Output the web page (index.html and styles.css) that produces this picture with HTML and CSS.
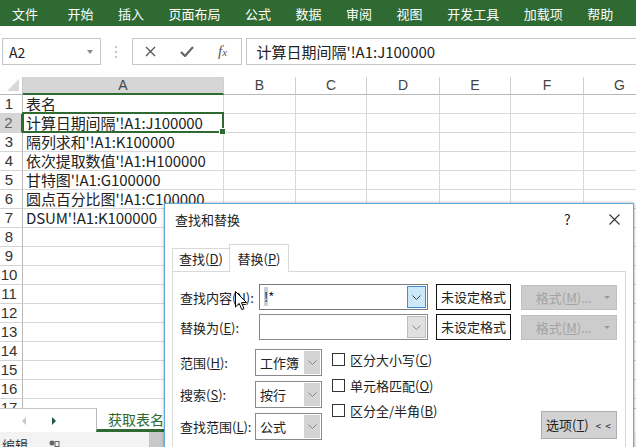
FILE: index.html
```html
<!DOCTYPE html>
<html>
<head>
<meta charset="utf-8">
<title>Excel</title>
<link rel="stylesheet" href="styles.css">
</head>
<body>
<div class="app">
  <nav class="menubar">
    <span class="menu first">文件</span><span class="menu">开始</span><span class="menu">插入</span><span class="menu">页面布局</span><span class="menu">公式</span><span class="menu">数据</span><span class="menu">审阅</span><span class="menu">视图</span><span class="menu">开发工具</span><span class="menu">加载项</span><span class="menu">帮助</span>
  </nav>

  <div class="fbar">
    <div class="namebox"><span>A2</span><span class="nb-arrow"></span></div>
    <div class="dots"><i></i><i></i><i></i></div>
    <div class="fbtns">
      <span class="fb"><svg width="11" height="11" viewBox="0 0 11 11"><path d="M1 1L10 10M10 1L1 10" stroke="#555" stroke-width="1.3" fill="none"/></svg></span>
      <span class="fb"><svg width="14" height="11" viewBox="0 0 14 11"><path d="M1 6L5 10L13 1" stroke="#666" stroke-width="2.2" fill="none"/></svg></span>
      <span class="fb fx">f<small>x</small></span>
    </div>
    <div class="finput">计算日期间隔'!A1:J100000</div>
  </div>

  <div class="sheet">
    <div class="grid">
      <div class="corner"><span class="tri"></span></div><div class="ch selh">A</div><div class="ch">B</div><div class="ch">C</div><div class="ch">D</div><div class="ch">E</div><div class="ch">F</div><div class="ch">G</div>
      <div class="rh">1</div><div class="c">表名</div><div class="c"></div><div class="c"></div><div class="c"></div><div class="c"></div><div class="c"></div><div class="c"></div>
      <div class="rh selr">2</div><div class="c active">计算日期间隔'!A1:J100000</div><div class="c"></div><div class="c"></div><div class="c"></div><div class="c"></div><div class="c"></div><div class="c"></div>
      <div class="rh">3</div><div class="c">隔列求和'!A1:K100000</div><div class="c"></div><div class="c"></div><div class="c"></div><div class="c"></div><div class="c"></div><div class="c"></div>
      <div class="rh">4</div><div class="c">依次提取数值'!A1:H100000</div><div class="c"></div><div class="c"></div><div class="c"></div><div class="c"></div><div class="c"></div><div class="c"></div>
      <div class="rh">5</div><div class="c">甘特图'!A1:G100000</div><div class="c"></div><div class="c"></div><div class="c"></div><div class="c"></div><div class="c"></div><div class="c"></div>
      <div class="rh">6</div><div class="c">圆点百分比图'!A1:C100000</div><div class="c"></div><div class="c"></div><div class="c"></div><div class="c"></div><div class="c"></div><div class="c"></div>
      <div class="rh">7</div><div class="c">DSUM'!A1:K100000</div><div class="c"></div><div class="c"></div><div class="c"></div><div class="c"></div><div class="c"></div><div class="c"></div>
      <div class="rh">8</div><div class="c"></div><div class="c"></div><div class="c"></div><div class="c"></div><div class="c"></div><div class="c"></div><div class="c"></div>
      <div class="rh">9</div><div class="c"></div><div class="c"></div><div class="c"></div><div class="c"></div><div class="c"></div><div class="c"></div><div class="c"></div>
      <div class="rh">10</div><div class="c"></div><div class="c"></div><div class="c"></div><div class="c"></div><div class="c"></div><div class="c"></div><div class="c"></div>
      <div class="rh">11</div><div class="c"></div><div class="c"></div><div class="c"></div><div class="c"></div><div class="c"></div><div class="c"></div><div class="c"></div>
      <div class="rh">12</div><div class="c"></div><div class="c"></div><div class="c"></div><div class="c"></div><div class="c"></div><div class="c"></div><div class="c"></div>
      <div class="rh">13</div><div class="c"></div><div class="c"></div><div class="c"></div><div class="c"></div><div class="c"></div><div class="c"></div><div class="c"></div>
      <div class="rh">14</div><div class="c"></div><div class="c"></div><div class="c"></div><div class="c"></div><div class="c"></div><div class="c"></div><div class="c"></div>
      <div class="rh">15</div><div class="c"></div><div class="c"></div><div class="c"></div><div class="c"></div><div class="c"></div><div class="c"></div><div class="c"></div>
      <div class="rh">16</div><div class="c"></div><div class="c"></div><div class="c"></div><div class="c"></div><div class="c"></div><div class="c"></div><div class="c"></div>
      <div class="rh">17</div><div class="c"></div><div class="c"></div><div class="c"></div><div class="c"></div><div class="c"></div><div class="c"></div><div class="c"></div>
    </div>
  </div>

  <div class="tabbar">
    <div class="tabnav"><span class="nav-prev"></span><span class="nav-next"></span></div>
    <div class="sheettab">获取表名</div>
  </div>

  <div class="statusbar">
    <span class="st-text">编辑</span>
    <svg class="st-icon" width="11" height="8" viewBox="0 0 11 8"><circle cx="3" cy="3" r="2.5" fill="#666"/><rect x="6" y="1.5" width="4" height="5" fill="none" stroke="#666" stroke-width="1"/></svg>
    <span class="st-block"></span>
  </div>

  <div class="dialog">
    <div class="dtitle">
      <span class="dt-text">查找和替换</span>
      <span class="dt-help">?</span>
      <span class="dt-close"><svg width="11" height="11" viewBox="0 0 11 11"><path d="M0.5 0.5L10.5 10.5M10.5 0.5L0.5 10.5" stroke="#333" stroke-width="1.1" fill="none"/></svg></span>
    </div>
    <div class="tabs">
      <div class="tab">查找(<u>D</u>)</div>
      <div class="tab active">替换(<u>P</u>)</div>
    </div>
    <div class="panel">
      <div class="frow">
        <span class="flabel">查找内容(<u>N</u>):</span>
        <div class="combo focus"><span class="ctext"><span class="hl">!</span>*</span><span class="cbtn"><svg width="9" height="5" viewBox="0 0 9 5"><path d="M0.5 0.5L4.5 4.5L8.5 0.5" stroke="#444" stroke-width="1" fill="none"/></svg></span></div>
        <div class="fmtbox">未设定格式</div>
        <div class="fmtbtn"><span>格式(<u>M</u>)...</span><span class="caret"></span></div>
      </div>
      <div class="frow">
        <span class="flabel">替换为(<u>E</u>):</span>
        <div class="combo"><span class="ctext"></span><span class="cbtn"><svg width="9" height="5" viewBox="0 0 9 5"><path d="M0.5 0.5L4.5 4.5L8.5 0.5" stroke="#888" stroke-width="1" fill="none"/></svg></span></div>
        <div class="fmtbox">未设定格式</div>
        <div class="fmtbtn"><span>格式(<u>M</u>)...</span><span class="caret"></span></div>
      </div>
      <div class="opts">
        <div class="selcol">
          <div class="srow"><span class="slabel">范围(<u>H</u>):</span><div class="sel"><span class="stext">工作簿</span><span class="sbtn"><svg width="9" height="5" viewBox="0 0 9 5"><path d="M0.5 0.5L4.5 4.5L8.5 0.5" stroke="#888" stroke-width="1" fill="none"/></svg></span></div></div>
          <div class="srow"><span class="slabel">搜索(<u>S</u>):</span><div class="sel"><span class="stext">按行</span><span class="sbtn"><svg width="9" height="5" viewBox="0 0 9 5"><path d="M0.5 0.5L4.5 4.5L8.5 0.5" stroke="#888" stroke-width="1" fill="none"/></svg></span></div></div>
          <div class="srow"><span class="slabel">查找范围(<u>L</u>):</span><div class="sel"><span class="stext">公式</span><span class="sbtn"><svg width="9" height="5" viewBox="0 0 9 5"><path d="M0.5 0.5L4.5 4.5L8.5 0.5" stroke="#888" stroke-width="1" fill="none"/></svg></span></div></div>
        </div>
        <div class="chkcol">
          <div class="chk"><span class="box"></span><span>区分大小写(<u>C</u>)</span></div>
          <div class="chk"><span class="box"></span><span>单元格匹配(<u>O</u>)</span></div>
          <div class="chk"><span class="box"></span><span>区分全/半角(<u>B</u>)</span></div>
        </div>
        <div class="optbtn">选项(<u>T</u>) <span class="lt">&lt; &lt;</span></div>
      </div>
    </div>
  </div>

  <svg class="cursor" width="13" height="20" viewBox="0 0 13 20"><path d="M0.5 0.5L0.5 16L4.2 12.4L6.8 18.6L9 17.6L6.5 11.6L11.6 11.6Z" fill="#fff" stroke="#000" stroke-width="1" stroke-linejoin="miter"/></svg>
</div>
</body>
</html>
```

FILE: styles.css
```css
* { box-sizing: border-box; margin: 0; padding: 0; }
body {
  width: 636px; height: 447px; overflow: hidden; background: #fff;
  font-family: "Noto Sans CJK SC", "Liberation Sans", sans-serif; color: #222;
}
u { text-decoration: underline; text-underline-offset: 1px; }
.app { position: relative; width: 636px; height: 447px; overflow: hidden; }

/* menu */
.menubar {
  height: 26px; background: #2e6a32; color: #fff; font-size: 13px;
  display: flex; align-items: center; padding-left: 12px; gap: 24.5px; white-space: nowrap;
}
.menu.first { margin-right: 5px; }

/* formula bar */
.fbar { height: 51px; display: flex; align-items: flex-start; padding-top: 12px; }
.namebox {
  margin-left: 2px; width: 99px; height: 27px; border: 1px solid #c6c6c6;
  display: flex; align-items: center; justify-content: space-between;
  padding: 0 7px 0 6px; font-size: 14px; color: #222;
}
.nb-arrow { width: 0; height: 0; border-left: 3.5px solid transparent; border-right: 3.5px solid transparent; border-top: 4px solid #8a8a8a; }
.dots { width: 31px; height: 27px; display: flex; flex-direction: column; align-items: center; justify-content: center; gap: 3px; }
.dots i { display: block; width: 2px; height: 2px; background: #c4c4c4; }
.fbtns { width: 110px; height: 27px; border: 1px solid #c6c6c6; display: grid; grid-template-columns: 36px 36px 36px; align-items: center; justify-items: center; }
.fb { display: flex; align-items: center; }
.fx { font-family: "Liberation Serif", serif; font-style: italic; font-size: 15px; color: #555; }
.fx small { font-size: 11px; }
.finput { margin-left: 4px; width: 392px; height: 27px; border: 1px solid #c6c6c6; border-right: none; padding-left: 10px; font-size: 15px; line-height: 25px; color: #222; white-space: nowrap; }

/* sheet */
.sheet { height: 331px; overflow: hidden; }
.grid {
  display: grid; width: 656px;
  grid-template-columns: 23px 201px 72px 71px 73px 71px 73px 72px;
  grid-template-rows: 18px; grid-auto-rows: 19px;
}
.corner { border-right: 1px solid #c8c8c8; border-bottom: 1px solid #b8b8b8; position: relative; }
.tri { position: absolute; right: 3px; bottom: 3px; width: 0; height: 0; border-left: 12px solid transparent; border-bottom: 12px solid #d8d8d8; }
.ch { border-right: 1px solid #d0d0d0; border-bottom: 1px solid #b8b8b8; font-family: "Liberation Sans", sans-serif; font-size: 14px; line-height: 17px; text-align: center; color: #444; }
.ch.selh { background: #d6d6d6; border-bottom: 2px solid #2e6a32; line-height: 16px; }
.rh { border-right: 1px solid #b8b8b8; border-bottom: 1px solid #d4d4d4; font-family: "Liberation Sans", sans-serif; font-size: 15px; line-height: 18px; text-align: center; padding-right: 4px; color: #333; }
.rh.selr { background: #d6d6d6; border-right: 2px solid #2e6a32; color: #666; }
.c { border-right: 1px solid #d8d8d8; border-bottom: 1px solid #d8d8d8; font-size: 15px; line-height: 18px; padding-left: 3px; white-space: nowrap; color: #222; position: relative; letter-spacing: -0.1px; }
.c.active::after { content: ""; position: absolute; left: -1px; top: -2px; right: -1px; bottom: -1px; border: 2px solid #2e6a32; }
.c.active::before { content: ""; position: absolute; right: -3px; bottom: -3px; width: 5px; height: 5px; background: #2e6a32; border: 1px solid #fff; z-index: 1; }

/* sheet tabs */
.tabbar { height: 24px; display: flex; border-top: 1px solid #c6c6c6; background: #fff; }
.tabnav { width: 96px; display: flex; align-items: center; }
.nav-prev { margin-left: 22px; width: 0; height: 0; border-top: 4px solid transparent; border-bottom: 4px solid transparent; border-right: 4px solid #c8c8c8; }
.nav-next { margin-left: 26px; width: 0; height: 0; border-top: 4px solid transparent; border-bottom: 4px solid transparent; border-left: 4px solid #1f5a48; }
.sheettab { margin-top: -1px; width: 80px; border-left: 1px solid #b8b8b8; background: #fff; color: #2e6a32; font-size: 14px; padding-left: 11px; line-height: 22px; border-bottom: 3px solid #2e6a32; }

/* status bar */
.statusbar { height: 22px; background: #f3f3f3; display: flex; align-items: flex-start; padding-top: 5px; font-size: 13px; color: #333; }
.st-text { margin-left: 2px; line-height: 15px; }
.st-icon { margin-left: 21px; margin-top: 3px; }
.st-block { margin-left: 89px; margin-top: -5px; width: 16px; height: 22px; background: #c8c8c8; }

/* dialog */
.dialog {
  position: absolute; left: 164px; top: 203px; width: 470px; height: 260px;
  background: #fff; border: 1px solid #62a8d8; box-shadow: 0 0 3px rgba(0,0,0,0.35);
  font-size: 13px; color: #222; z-index: 5;
}
.dtitle { height: 30px; display: flex; align-items: center; padding-left: 10px; }
.dt-text { flex: 1; }
.dt-help { width: 45px; font-size: 14px; }
.dt-close { width: 24px; display: flex; align-items: center; }
.tabs { height: 37px; display: flex; align-items: flex-end; padding-left: 7px; position: relative; z-index: 1; }
.tab { width: 57px; height: 23px; border: 1px solid #d9d9d9; border-right: none; border-bottom: none; text-align: center; line-height: 20px; }
.tab.active { width: 60px; height: 28px; border-right: 1px solid #d9d9d9; background: #fff; margin-bottom: -1px; line-height: 27px; }
.panel { margin-left: 7px; width: 454px; height: 200px; border: 1px solid #d9d9d9; padding: 12px 8px 0 7px; }
.frow { display: flex; align-items: center; height: 26px; margin-bottom: 4px; }
.flabel { width: 79px; white-space: nowrap; }
.combo { width: 169px; height: 26px; border: 1px solid #8a8a8a; display: flex; align-items: stretch; padding: 1px; }
.combo.focus { border-color: #7a7a7a; }
.ctext { flex: 1; padding-left: 3px; line-height: 22px; font-size: 13px; }
.hl { background: #cfcfcf; }
.cbtn { width: 19px; display: flex; align-items: center; justify-content: center; background: #e0e0e0; border: 1px solid #bdbdbd; }
.combo.focus .cbtn { background: #cce8fa; border-color: #3c8fd8; }
.fmtbox { margin-left: 8px; width: 75px; height: 26px; border: 1px solid #111; text-align: center; line-height: 24px; }
.fmtbtn { margin-left: 10px; width: 96px; height: 25px; background: #cccccc; border: 1px solid #c0c0c0; color: #a3a3a3; display: flex; align-items: center; justify-content: flex-end; padding-right: 6px; gap: 12px; }
.caret { width: 0; height: 0; border-left: 3px solid transparent; border-right: 3px solid transparent; border-top: 3px solid #999; }
.opts { display: flex; margin-top: 9px; }
.selcol { display: flex; flex-direction: column; gap: 5px; }
.srow { display: flex; align-items: center; }
.slabel { width: 75px; white-space: nowrap; }
.sel { width: 67px; height: 27px; border: 1px solid #8a8a8a; display: flex; padding: 1px; }
.stext { flex: 1; padding-left: 3px; line-height: 23px; }
.sbtn { width: 16px; display: flex; align-items: center; justify-content: center; background: #d4d4d4; }
.chkcol { margin-left: 10px; padding-top: 4px; display: flex; flex-direction: column; gap: 12.5px; }
.chk { display: flex; align-items: center; height: 13px; gap: 5px; white-space: nowrap; line-height: 13px; }
.box { width: 13px; height: 13px; border: 1px solid #333; background: #fff; }
.optbtn { margin-left: auto; align-self: flex-end; margin-bottom: 1px; width: 76px; height: 28px; background: #d2d2d2; border: 1px solid #adadad; text-align: center; line-height: 26px; }
.lt { font-size: 10px; letter-spacing: 1px; margin-left: 4px; }

.cursor { position: absolute; left: 235px; top: 291px; z-index: 10; }
```
